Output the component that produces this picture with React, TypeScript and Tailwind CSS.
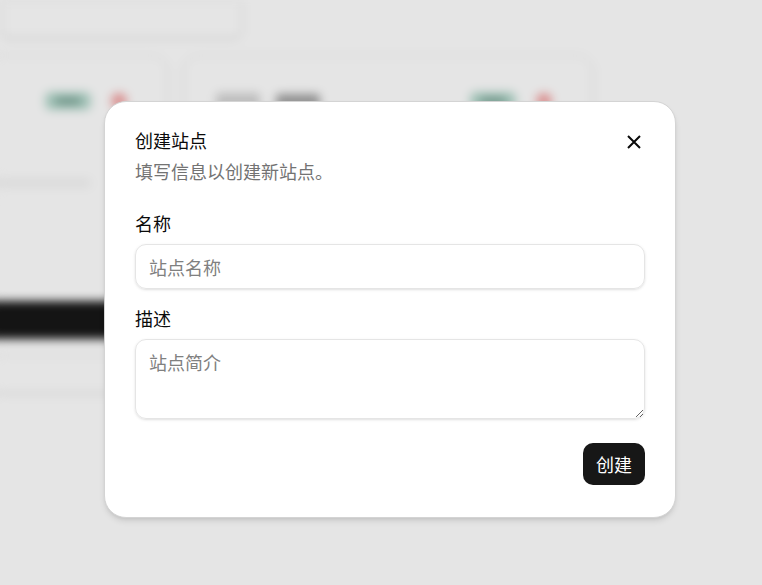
import React from "react";

const font = { fontFamily: '"Noto Sans CJK SC", "Noto Sans", sans-serif' };

function BackgroundPage() {
  return (
    <div className="blur-[5px] bg-white min-h-[585px] pointer-events-none select-none">
      <div className="w-[242px] h-[40px] border border-neutral-200 rounded-lg -mt-[2px] shadow-sm" />
      <div className="flex gap-[15px] mt-[17px] -ml-[242px]">
        {[0, 1].map((i) => (
          <div key={i} className="w-[410px] h-[338px] border border-neutral-200 rounded-2xl shadow-sm pl-[32px] pr-[40px] pt-[36px]">
            <div className="flex items-center gap-4">
              <div className="w-[44px] h-[16px] rounded bg-neutral-300" />
              <div className="w-[44px] h-[14px] rounded bg-neutral-400" />
              <div className="flex-1" />
              <div className="w-[46px] h-[18px] rounded-md bg-[#b5d9cd] flex items-center justify-center">
                <div className="w-[26px] h-[8px] rounded bg-[#7fa89a]" />
              </div>
              <div className="w-[16px] h-[16px] rounded-full bg-[#f4a3a3] ml-[4px]" />
            </div>
            <div className="mt-[68px] h-[10px] w-[300px] rounded bg-neutral-100" />
            <div className="mt-[8px] h-[10px] w-[200px] rounded bg-neutral-100" />
            <div className="mt-[95px] h-[38px] rounded-lg bg-[#171717]" />
            <div className="mt-[16px] h-[38px] rounded-lg border border-neutral-200 flex items-center justify-center">
              <div className="w-[10px] h-[10px] rounded-full bg-neutral-400" />
            </div>
          </div>
        ))}
      </div>
    </div>
  );
}

export default function App() {
  return (
    <div className="relative w-[762px] h-[585px] overflow-hidden" style={font}>
      <BackgroundPage />
      <div className="absolute inset-0 bg-black/10" />
      <div className="absolute left-[104px] top-[101px] w-[572px] bg-white border border-neutral-300 rounded-[22px] shadow-md px-[30px] pt-[24px] pb-[32px]">
        <div className="flex items-start justify-between">
          <div className="flex flex-col gap-[3px]">
            <h2 className="text-[18px] leading-[28px] text-[#0a0a0a]">创建站点</h2>
            <p className="text-[18px] leading-[28px] text-[#737373]">填写信息以创建新站点。</p>
          </div>
          <button className="mt-[9px] mr-[4px] text-[#0a0a0a]">
            <svg width="14" height="14" viewBox="0 0 14 14" fill="none">
              <path d="M1 1L13 13M13 1L1 13" stroke="currentColor" strokeWidth="2" />
            </svg>
          </button>
        </div>

        <div className="mt-[24px] flex flex-col gap-[7px]">
          <label className="text-[18px] leading-[28px] text-[#0a0a0a]">名称</label>
          <input
            placeholder="站点名称"
            className="h-[45px] w-full rounded-[11px] border border-neutral-200 shadow-sm px-[13px] text-[18px] text-[#0a0a0a] placeholder:text-[#808080] outline-none"
          />
        </div>

        <div className="mt-[15px] flex flex-col gap-[7px]">
          <label className="text-[18px] leading-[28px] text-[#0a0a0a]">描述</label>
          <textarea
            placeholder="站点简介"
            className="h-[80px] w-full rounded-[11px] border border-neutral-200 shadow-sm px-[13px] py-[8px] text-[18px] leading-[28px] text-[#0a0a0a] placeholder:text-[#808080] outline-none"
          />
        </div>

        <div className="mt-[24px] flex justify-end">
          <button className="h-[42px] px-[13px] rounded-[10px] bg-[#171717] text-white text-[18px]">创建</button>
        </div>
      </div>
    </div>
  );
}
